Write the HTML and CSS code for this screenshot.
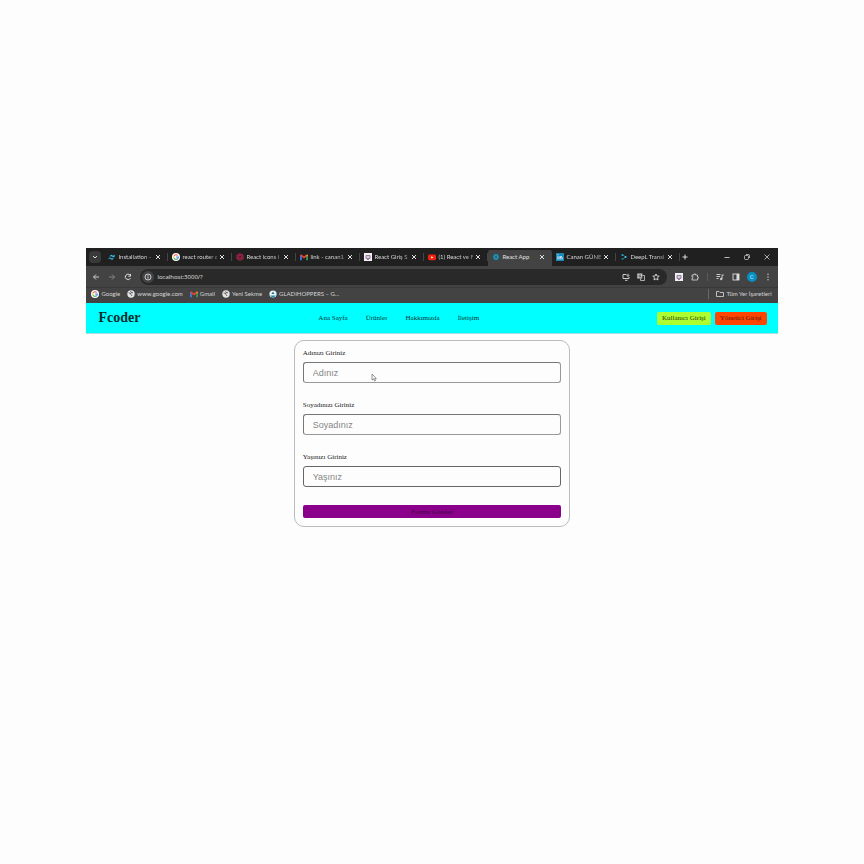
FILE: index.html
```
<!DOCTYPE html>
<html lang="tr">
<head>
<meta charset="utf-8">
<title>React App</title>
<link rel="stylesheet" href="styles.css">
</head>
<body>
<svg class="defs" aria-hidden="true">
  <symbol id="close" viewBox="0 0 6 6"><path d="M1 1l4 4M5 1L1 5" stroke="#ddd" fill="none"/></symbol>
  <symbol id="google" viewBox="0 0 10 10"><circle cx="5" cy="5" r="5" fill="#fff"/><path d="M7.2 3A3 3 0 0 0 2.5 3.5" stroke="#e94b3c" stroke-width="1.3" fill="none"/><path d="M2.5 3.5a3 3 0 0 0 0 3" stroke="#f5bd25" stroke-width="1.3" fill="none"/><path d="M2.5 6.5A3 3 0 0 0 7 7.2" stroke="#38a956" stroke-width="1.3" fill="none"/><path d="M7 7.2A3 3 0 0 0 8 5H5.2" stroke="#4385f4" stroke-width="1.3" fill="none"/></symbol>
  <symbol id="gmail" viewBox="0 0 10 8"><path d="M1.2 8V1.5" stroke="#4285f4" stroke-width="2"/><path d="M8.8 8V1.5" stroke="#34a853" stroke-width="2"/><path d="M.8 1.2L5 4.5l4.2-3.3" stroke="#ea4335" stroke-width="2" fill="none"/><path d="M8 2.2L9.6 1v2H8z" fill="#fbbc04"/></symbol>
  <symbol id="globe" viewBox="0 0 10 10"><circle cx="5" cy="5" r="4.6" fill="#e4e4e4"/><path d="M2 3.5l3 1v1.500l1.500 1.500M4.500 1.500L5 3l2.500.5" stroke="#444" stroke-width="1" fill="none"/></symbol>
  <symbol id="robot" viewBox="0 0 8 8"><rect width="8" height="8" fill="#f2eef2"/><path d="M2 2.5h4v3H2zM3 6.5h2" stroke="#81618b" stroke-width=".8" fill="none"/><path d="M3 3.5v1M5 3.5v1" stroke="#555" stroke-width=".8"/></symbol>
</svg>

<main class="screen">
  <div class="tabs">
    <button class="chevron" aria-label="Sekmelerde ara"><svg viewBox="0 0 12 12" width="12" height="12"><path d="M4 5l2 2 2-2" stroke="#ddd" fill="none"/></svg></button>
    <div class="tab"><svg class="fav" viewBox="0 0 10 8"><path d="M2 4Q3 0 5 1.500t4-.5Q8 6 6 4T2 4M0 7Q1 3.500 3 5t4-.5Q6 9 4 7T0 7" fill="#35b9e8"/></svg><span>Installation -</span><button aria-label="Kapat"><svg><use href="#close"/></svg></button></div>
    <div class="tab"><svg class="fav"><use href="#google"/></svg><span>react router d</span><button aria-label="Kapat"><svg><use href="#close"/></svg></button></div>
    <div class="tab"><svg class="fav" viewBox="0 0 10 10"><path d="M5 0l4.500 2.500v5L5 10 .5 7.500v-5z" fill="#8c2440"/><path d="M3 4l2 1 2-1M5 5v3" stroke="#4d1728" fill="none"/></svg><span>React icons i</span><button aria-label="Kapat"><svg><use href="#close"/></svg></button></div>
    <div class="tab"><svg class="fav"><use href="#gmail"/></svg><span>link - canan1</span><button aria-label="Kapat"><svg><use href="#close"/></svg></button></div>
    <div class="tab"><svg class="fav"><use href="#robot"/></svg><span>React Giriş S</span><button aria-label="Kapat"><svg><use href="#close"/></svg></button></div>
    <div class="tab"><svg class="fav" viewBox="0 0 10 8"><rect y="1" width="10" height="7" rx="2" fill="#f5200d"/><path d="M4 3v3l3-1.500z" fill="#fff"/></svg><span>(1) React ve F</span><button aria-label="Kapat"><svg><use href="#close"/></svg></button></div>
    <div class="tab active"><svg class="fav" viewBox="0 0 10 10"><circle cx="5" cy="5" r="4.500" fill="#174a5c"/><g fill="none" stroke="#36a9c9" stroke-width=".7"><ellipse cx="5" cy="5" rx="4" ry="1.600"/><ellipse cx="5" cy="5" rx="4" ry="1.600" transform="rotate(60 5 5)"/><ellipse cx="5" cy="5" rx="4" ry="1.600" transform="rotate(120 5 5)"/></g></svg><span>React App</span><button aria-label="Kapat"><svg><use href="#close"/></svg></button></div>
    <div class="tab"><svg class="fav" viewBox="0 0 8 8"><rect width="8" height="8" fill="#1789b8"/><path d="M2 3.200V6.500M4 6.500V3.200M4 4.500Q6 2.500 6 4.500v2M2 1.300v1" stroke="#fff" fill="none"/></svg><span>Canan GÜNE</span><button aria-label="Kapat"><svg><use href="#close"/></svg></button></div>
    <div class="tab"><svg class="fav" viewBox="0 0 10 10"><path d="M3 2l4 3-4 3" stroke="#1595bd" fill="none"/><circle cx="3" cy="2.500" r="1.200" fill="#29aad0"/><circle cx="7" cy="5" r="1.200" fill="#5bc5e4"/><circle cx="3" cy="7.500" r="1.200" fill="#147895"/></svg><span>DeepL Transl</span><button aria-label="Kapat"><svg><use href="#close"/></svg></button></div>
    <button class="plus" aria-label="Yeni sekme"><svg viewBox="0 0 6 6" width="6" height="6"><path d="M3 .5v5M.5 3h5" stroke="#ddd"/></svg></button>
    <div class="window">
      <button aria-label="Küçült"><svg viewBox="0 0 8 8"><path d="M1.500 4.500h5" stroke="#bbb"/></svg></button>
      <button aria-label="Geri yükle"><svg viewBox="0 0 8 8"><rect x="1.500" y="2.500" width="4" height="4" rx="1" stroke="#ccc" stroke-width=".8" fill="none"/><path d="M3 1.500h2.500q1 0 1 1V5" stroke="#ccc" stroke-width=".8" fill="none"/></svg></button>
      <button aria-label="Pencereyi kapat"><svg viewBox="0 0 8 8"><path d="M1.500 1.500l5 5M6.500 1.500l-5 5" stroke="#ccc" stroke-width=".8"/></svg></button>
    </div>
  </div>

  <div class="toolbar">
    <button aria-label="Geri"><svg viewBox="0 0 8 8"><path d="M7 4H1.500M4 1.500L1.500 4 4 6.500" stroke="#ccc" fill="none"/></svg></button>
    <button aria-label="İleri"><svg viewBox="0 0 8 8"><path d="M1 4h5.500M4 1.500L6.500 4 4 6.500" stroke="#858585" fill="none"/></svg></button>
    <button aria-label="Yenile"><svg viewBox="0 0 8 8"><path d="M6.500 5A2.700 2.700 0 1 1 6 2M6.500 1v2.200H4.300" stroke="#ddd" fill="none"/></svg></button>
    <div class="address">
      <svg viewBox="0 0 12 12" class="info"><circle cx="6" cy="6" r="6" fill="#434343"/><circle cx="6" cy="6" r="3" stroke="#ddd" stroke-width=".9" fill="none"/><path d="M6 5.500v2M6 4v.8" stroke="#ddd"/></svg>
      <input type="text" value="localhost:3000/?" aria-label="Adres">
      <button aria-label="Uygulamayı yükle"><svg viewBox="0 0 8 8"><path d="M4.500 1.500H1v4h6V4M3 7.300h2.500M6 .8v2.500M4.800 2.300L6 3.500l1.200-1.200" stroke="#ddd" stroke-width=".9" fill="none"/></svg></button>
      <button aria-label="Çevir"><svg viewBox="0 0 8 8"><rect x=".3" y=".5" width="5" height="5" fill="#ccc"/><path d="M5.500 2.500h2v5h-4v-2" stroke="#ccc" stroke-width=".8" fill="none"/><path d="M4 2H2v2h1.800V3H3M4.500 4.500h2M6 4.200Q5.500 6 4.500 6.500" stroke="#444" stroke-width=".7" fill="none"/></svg></button>
      <button aria-label="Yer işareti ekle"><svg viewBox="0 0 8 8"><path d="M4 1l.9 2 2.300.2-1.700 1.500.5 2.300-2-1.200L2 7l.5-2.300L.8 3.200 3.100 3z" stroke="#ddd" stroke-width=".9" fill="none"/></svg></button>
    </div>
    <div class="tools">
      <button aria-label="Uzantı"><svg><use href="#robot"/></svg></button>
      <button aria-label="Uzantılar"><svg viewBox="0 0 8 8"><path d="M1 2h2V1h1.500v1H6.500v2h.8v1.300h-.8V7H1V5.300h.8V3.800H1z" stroke="#ccc" stroke-width=".9" fill="none"/></svg></button>
      <i></i>
      <button aria-label="Medya"><svg viewBox="0 0 8 8"><path d="M.5 1.500h4M.5 3.500h3.500M.5 5.500h2M6 6V2h1.800" stroke="#ccc" fill="none"/><circle cx="5.200" cy="6" r="1.200" fill="#ccc"/></svg></button>
      <button aria-label="Yan panel"><svg viewBox="0 0 8 8"><rect x="1" y="1" width="6" height="6" stroke="#ddd" stroke-width=".9" fill="none"/><path d="M4.500 1H7v6H4.500z" fill="#ddd"/></svg></button>
      <button class="avatar" aria-label="Profil">C</button>
      <button aria-label="Menü"><svg viewBox="0 0 8 8" fill="#ccc"><circle cx="4" cy="1.200" r=".7"/><circle cx="4" cy="4" r=".7"/><circle cx="4" cy="6.800" r=".7"/></svg></button>
    </div>
  </div>

  <div class="bookmarks">
    <a href="#"><svg><use href="#google"/></svg>Google</a>
    <a href="#"><svg><use href="#globe"/></svg>www.google.com</a>
    <a href="#"><svg><use href="#gmail"/></svg>Gmail</a>
    <a href="#"><svg><use href="#globe"/></svg>Yeni Sekme</a>
    <a href="#"><svg viewBox="0 0 10 10"><circle cx="5" cy="5" r="4.500" fill="#eaf6fa"/><path d="M1.500 7h7A4 4 0 0 1 1.500 7" fill="#168bb3"/><path d="M3 5h4L5 2z" fill="#277795"/></svg>GLADIHOPPERS – G...</a>
    <a href="#" class="all"><svg viewBox="0 0 8 8"><path d="M.5 1.500H3L4 2.500h3.500v4h-7z" stroke="#ccc" stroke-width=".9" fill="none"/></svg>Tüm Yer İşaretleri</a>
  </div>

  <header class="site">
    <h1>Fcoder</h1>
    <nav><a href="#">Ana Sayfa</a><a href="#">Ürünler</a><a href="#">Hakkımızda</a><a href="#">İletişim</a></nav>
    <div class="logins"><button class="user">Kullanıcı Girişi</button><button class="admin">Yönetici Girişi</button></div>
  </header>

  <form>
    <label for="ad">Adınızı Giriniz</label>
    <input id="ad" type="text" placeholder="Adınız">
    <label for="soyad">Soyadınızı Giriniz</label>
    <input id="soyad" type="text" placeholder="Soyadınız">
    <label for="yas">Yaşınızı Giriniz</label>
    <input id="yas" class="focused" type="text" placeholder="Yaşınız">
    <button type="button">Formu Gönder</button>
    <svg class="cursor" viewBox="0 0 6 9" aria-hidden="true"><path d="M1 1v6l1.500-1.200L3.500 8l1-.5-.9-2H5.300z" fill="#fff" stroke="#777" stroke-width=".8"/></svg>
  </form>
</main>
</body>
</html>
```
FILE: styles.css
```
* { box-sizing: border-box; }
body { margin: 0; background: #fdfdfd; font-family: "Liberation Serif", serif; color: #222; }
button { border: 0; padding: 0; background: none; font-family: inherit; display: flex; align-items: center; justify-content: center; }
a { color: inherit; text-decoration: none; }
svg { flex: none; }
.defs { display: none; }

.screen { width: 80%; margin: 248px auto 0; }
.tabs, .toolbar, .bookmarks { display: flex; align-items: center; font-family: Lato, sans-serif; font-size: 6px; color: #d4d4d4; }

.tabs { height: 18px; background: #202020; padding-left: 3px; }
.chevron { width: 12px; height: 12px; border-radius: 4px; background: #393939; margin-right: 3px; }
.tab { flex: 0 1 64px; min-width: 0; height: 14px; display: flex; align-items: center; padding: 0 7px 0 4px; position: relative; }
.tab::after { content: ""; position: absolute; right: 0; top: 3px; width: 1px; height: 8px; background: #444; }
.fav { width: 8px; height: 8px; margin-right: 2px; }
.tab span { flex: 1; min-width: 0; overflow: hidden; white-space: nowrap; margin-right: 2px; line-height: 10px; }
.tab:not(.active) span { mask-image: linear-gradient(to right, #000 70%, #0008); }
.tab button svg { width: 6px; height: 6px; }
.active { height: 18px; background: linear-gradient(#202020 2px, #434343 2px); border-radius: 5px 5px 0 0; color: #e0e0e0; }
.active::after { display: none; }
.plus { width: 10px; height: 10px; }
.window { margin-left: auto; display: flex; gap: 12px; padding-right: 7px; }
.window svg { width: 8px; height: 8px; }

.toolbar { height: 21px; background: #434343; padding: 0 6px; gap: 8px; }
.toolbar svg { width: 8px; height: 8px; }
.address { flex: 1; height: 16px; border-radius: 8px; background: #292929; display: flex; align-items: center; gap: 7px; padding: 0 7px 0 2px; }
.address .info { width: 12px; height: 12px; }
.address input { flex: 1; min-width: 0; border: 0; padding: 0; margin-left: -4px; background: none; color: #e0e0e0; font: 6px "Open Sans", sans-serif; outline: 0; }
.tools { display: flex; align-items: center; gap: 8px; }
.tools i { width: 1px; height: 8px; background: #5a5a5a; }
.tools .avatar { width: 10px; height: 10px; border-radius: 50%; background: #078fc4; color: #cfe9f4; font: 6px Roboto, sans-serif; margin: 0 -1px; }

.bookmarks { height: 16px; background: #434343; border-top: 1px solid #393939; padding: 0 6px 4px 5px; gap: 7px; line-height: 10px; }
.bookmarks a { display: flex; align-items: center; gap: 2px; white-space: nowrap; }
.bookmarks svg { width: 8px; height: 8px; }
.bookmarks .all { margin-left: auto; border-left: 1px solid #686868; padding-left: 7px; gap: 3px; }

.site { height: 31px; background: #00ffff; border-bottom: 1px solid #a5dede; padding: 0 11px 0 12px; display: flex; justify-content: space-between; align-items: center; }
.site h1 { margin: 0; font-size: 14px; line-height: 16px; color: #062b2b; }
.site nav { display: flex; gap: 18px; font-size: 7px; line-height: 8px; color: #033; }
.logins { display: flex; gap: 4px; }
.logins button { height: 13px; padding: 0 5px; border-radius: 2px; font-size: 7px; line-height: 8px; white-space: nowrap; }
.logins .user { background: #adff2f; color: #2c430b; }
.logins .admin { background: #ff4500; color: #5c1600; }

form { width: 40%; margin: 6px auto 0; padding: 8px; border: 1px solid #bbb; border-radius: 10px; display: flex; flex-direction: column; position: relative; }
form label { font-size: 7px; line-height: 8px; margin-bottom: 5px; color: #222; }
form input { width: 100%; height: 21px; margin: 0 0 18px; padding: 0 9px; border: 1px solid #999; border-top-color: #777; border-left-color: #777; border-radius: 3px; background: #fdfdfd; font: 9px "Liberation Sans", sans-serif; color: #222; }
form input::placeholder { color: #858585; opacity: 1; }
form .focused { border-color: #666; }
form button { height: 13px; border-radius: 2px; background: #8b008b; color: #3d003d; font-size: 7px; line-height: 8px; }
.cursor { position: absolute; left: 76px; top: 32px; width: 6px; height: 9px; }
```
